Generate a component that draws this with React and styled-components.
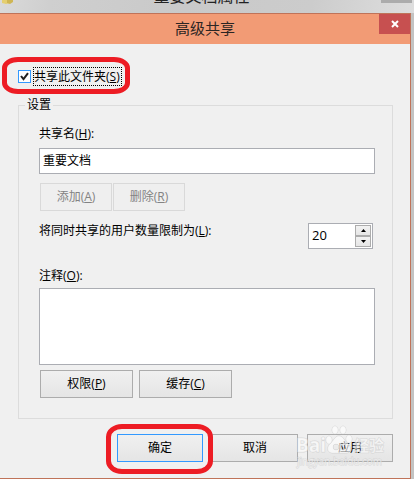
import React from 'react';
import styled, { createGlobalStyle, css } from 'styled-components';

const GlobalStyle = createGlobalStyle`
  *, *::before, *::after { box-sizing: border-box; }
  body {
    margin: 0;
    background: #c3c3c2;
    color: #000;
    font: 12px/16px 'Open Sans', 'Noto Sans CJK SC', sans-serif;
  }
  button, input, textarea { font: inherit; color: inherit; margin: 0; }
`;

const Desktop = styled.div`
  min-height: 100vh;
  display: flex;
  flex-direction: column;
  overflow: hidden;
`;

const ParentBar = styled.header`
  height: 13px;
  display: grid;
  grid-template-columns: 24px 1fr 35px;
  background: linear-gradient(100deg, #dadada 0%, #cfcfcf 12%, #c9c9c9 45%, #cccccc 75%, #dedede 100%);
  overflow: hidden;
`;

const ParentIcon = styled.svg`
  width: 16px;
  height: 5px;
`;

const ParentTitle = styled.div`
  font-size: 16px;
  line-height: 20px;
  margin-top: -14px;
  text-align: center;
  color: #222;
`;

const ParentClose = styled.div`
  height: 3px;
  width: 31px;
  margin-left: 2px;
  background: #acacac;
`;

const Dialog = styled.main`
  flex: 1;
  margin-right: 3px;
  display: flex;
  flex-direction: column;
  background: #f0f0f0;
  border: 1px solid #bf7359;
  border-left: 0;
`;

const TitleBar = styled.div`
  height: 30px;
  display: grid;
  grid-template-columns: 31px 1fr 31px;
  align-items: start;
  background: #f29b75;
`;

const Title = styled.h1`
  grid-column: 2;
  margin: 0;
  font-size: 15px;
  font-weight: 400;
  line-height: 28px;
  text-align: center;
  color: #2b2523;
`;

const CloseButton = styled.button`
  height: 20px;
  padding: 0;
  border: 0;
  display: grid;
  place-items: center;
  background: #c75050;
`;

const Body = styled.div`
  display: flex;
  flex-direction: column;
  padding: 23px 17px 16px 18px;
`;

const ringBase = css`
  &::after {
    content: '';
    position: absolute;
    border: 5px solid #ed1c24;
    pointer-events: none;
    z-index: 1;
  }
`;

const ShareRow = styled.div`
  position: relative;
  align-self: flex-start;
  display: flex;
  align-items: center;
  gap: 2px;
  ${ringBase}
  &::after {
    inset: -10px -8px -8px -16px;
    border-radius: 16px / 11px;
  }
`;

const CheckBox = styled.input`
  appearance: none;
  width: 13px;
  height: 13px;
  border: 1px solid #3399ff;
  background: #fff;
  &:checked {
    background: #fff url("data:image/svg+xml,%3Csvg xmlns='http://www.w3.org/2000/svg' viewBox='0 0 11 11'%3E%3Cpath d='M2 5l2.5 3.2L9 2.2' fill='none' stroke='%23212121' stroke-width='2'/%3E%3C/svg%3E") center / 11px 11px;
  }
`;

const FocusLabel = styled.label`
  height: 19px;
  padding: 1px 1px 0 0;
  border: 1px dotted #000;
  line-height: 16px;
`;

const Group = styled.fieldset`
  min-width: 0;
  margin: 11px 0 0;
  padding: 13px 17px 20px 20px;
  border: 1px solid #dcdcdc;
`;

const Legend = styled.legend`
  margin-left: -14px;
  padding: 0 2px;
  line-height: 16px;
`;

const FieldLabel = styled.label`
  display: block;
  margin-top: ${({ $top = 0 }) => $top}px;
  line-height: 16px;
`;

const TextBox = styled.input`
  display: block;
  width: 100%;
  height: 26px;
  margin-top: 6px;
  padding: 0 3px 2px;
  border: 1px solid #abadb3;
  background: #fff;
`;

const Comment = styled.textarea`
  display: block;
  width: 100%;
  height: 77px;
  margin-top: 4px;
  padding: 3px;
  border: 1px solid #abadb3;
  background: #fff;
  resize: none;
`;

const ButtonRow = styled.div`
  display: flex;
  gap: ${({ $gap }) => $gap}px;
  margin-top: ${({ $top }) => $top}px;
  padding-left: 1px;
`;

const PushButton = styled.button`
  width: ${({ $width }) => $width}px;
  height: 28px;
  padding: 0 0 1px;
  border: 1px solid ${({ $primary }) => ($primary ? '#3399ff' : '#acacac')};
  background: linear-gradient(#f0f0f0, #e5e5e5);
  &:disabled {
    color: #838383;
    border-color: #d9d9d9;
    background: #efefef;
  }
`;

const LimitRow = styled.div`
  display: flex;
  justify-content: space-between;
  align-items: flex-start;
  margin-top: 12px;
  padding-right: 2px;
`;

const Spinner = styled.div`
  display: flex;
  width: 65px;
  height: 26px;
  padding: 1px;
  border: 1px solid #abadb3;
  background: #fff;
`;

const SpinnerInput = styled.input`
  flex: 1;
  min-width: 0;
  padding: 0 2px 2px;
  border: 0;
  background: transparent;
  font-size: 13px;
`;

const SpinnerButtons = styled.div`
  display: grid;
  grid-template-rows: 1fr 1fr;
  width: 16px;
  background: #f0f0f0;
`;

const SpinButton = styled.button`
  display: grid;
  place-items: center;
  padding: 0;
  border: 1px solid #acacac;
  background: linear-gradient(#f2f2f2, #e6e6e6);
`;

const Footer = styled.footer`
  position: relative;
  display: flex;
  justify-content: flex-end;
  gap: 9px;
  margin-top: 15px;
`;

const RingedButton = styled.div`
  position: relative;
  ${ringBase}
  &::after {
    inset: -10px -10px -12px -11px;
    border-radius: 16px / 13px;
  }
`;

const Watermark = styled.svg`
  position: absolute;
  right: 4px;
  top: -10px;
  width: 96px;
  height: 48px;
  pointer-events: none;
  font-family: 'Open Sans', 'Noto Sans CJK SC', sans-serif;
  fill: #fff;
  fill-opacity: 0.6;
  stroke: #c0c0c0;
  stroke-opacity: 0.5;
  paint-order: stroke;
`;

function Paw() {
  return (
    <g>
      <ellipse cx="36" cy="16" rx="3" ry="4" />
      <ellipse cx="42" cy="6" rx="3" ry="4" />
      <ellipse cx="50" cy="6" rx="3" ry="4" />
      <ellipse cx="56" cy="15" rx="3" ry="4" />
      <path
        fillRule="evenodd"
        d="M46 12c4 0 5 4 8 7 5 4 4 10-1 10-4 0-9 0-14 0-6-1-5-7-1-10 3-3 4-7 8-7zM43 20a3 3 0 1 0 0 6 3 3 0 1 0 0-6zM48 19v5c0 3 4 3 5 0v-4h-2v3h-1v-4z"
      />
    </g>
  );
}

export default function App() {
  return (
    <>
      <GlobalStyle />
      <Desktop>
        <ParentBar>
          <ParentIcon viewBox="0 0 16 5" aria-hidden="true">
            <path d="M2 0h8v3l-4 1-4-1z" fill="#e5cf70" />
            <path d="M7 0h6v2l-3 2-3-1z" fill="#cfb654" />
          </ParentIcon>
          <ParentTitle>重要文档属性</ParentTitle>
          <ParentClose />
        </ParentBar>
        <Dialog>
          <TitleBar>
            <Title>高级共享</Title>
            <CloseButton type="button" aria-label="关闭">
              <svg width="8" height="8" viewBox="0 0 8 8" aria-hidden="true">
                <path d="M1 1l6 6M7 1L1 7" stroke="#fff" strokeWidth="2" />
              </svg>
            </CloseButton>
          </TitleBar>
          <Body>
            <ShareRow>
              <CheckBox type="checkbox" id="share" defaultChecked />
              <FocusLabel htmlFor="share">共享此文件夹(<u>S</u>)</FocusLabel>
            </ShareRow>
            <Group>
              <Legend>设置</Legend>
              <FieldLabel htmlFor="name">共享名(<u>H</u>):</FieldLabel>
              <TextBox id="name" type="text" defaultValue="重要文档" />
              <ButtonRow $gap={1} $top={9}>
                <PushButton type="button" $width={72} disabled>添加(<u>A</u>)</PushButton>
                <PushButton type="button" $width={72} disabled>删除(<u>R</u>)</PushButton>
              </ButtonRow>
              <LimitRow>
                <FieldLabel htmlFor="limit">将同时共享的用户数量限制为(<u>L</u>):</FieldLabel>
                <Spinner>
                  <SpinnerInput id="limit" type="text" inputMode="numeric" defaultValue="20" />
                  <SpinnerButtons>
                    <SpinButton type="button" aria-label="增加">
                      <svg width="5" height="3" viewBox="0 0 5 3" aria-hidden="true"><path d="M0 3L2.5 0 5 3z" /></svg>
                    </SpinButton>
                    <SpinButton type="button" aria-label="减少">
                      <svg width="5" height="3" viewBox="0 0 5 3" aria-hidden="true"><path d="M0 0h5L2.5 3z" /></svg>
                    </SpinButton>
                  </SpinnerButtons>
                </Spinner>
              </LimitRow>
              <FieldLabel htmlFor="comment" $top={19}>注释(<u>O</u>):</FieldLabel>
              <Comment id="comment" />
              <ButtonRow $gap={6} $top={5}>
                <PushButton type="button" $width={93}>权限(<u>P</u>)</PushButton>
                <PushButton type="button" $width={93}>缓存(<u>C</u>)</PushButton>
              </ButtonRow>
            </Group>
            <Footer>
              <RingedButton>
                <PushButton type="button" $width={86} $primary>确定</PushButton>
              </RingedButton>
              <PushButton type="button" $width={86}>取消</PushButton>
              <PushButton type="button" $width={86}>应用</PushButton>
              <Watermark viewBox="0 0 96 48" aria-hidden="true">
                <text x="3" y="28" fontSize="19" fontWeight="700">Bai</text>
                <Paw />
                <text x="61" y="27" fontSize="15" fontWeight="700">经验</text>
                <text x="4" y="41" fontSize="10">jingyan.baidu.com</text>
              </Watermark>
            </Footer>
          </Body>
        </Dialog>
      </Desktop>
    </>
  );
}
